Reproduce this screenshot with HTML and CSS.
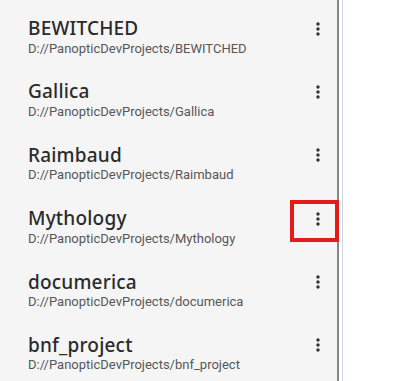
FILE: index.html
```html
<!DOCTYPE html>
<html>
<head>
<meta charset="utf-8">
<link rel="stylesheet" href="styles.css">
</head>
<body>
<div class="layout">
  <aside class="panel">
    <ul class="projects">
      <li class="project">
        <div class="info">
          <div class="name">BEWITCHED</div>
          <div class="path">D://PanopticDevProjects/BEWITCHED</div>
        </div>
        <button class="menu" aria-label="More"><svg viewBox="0 0 24 24" width="20" height="20"><path d="M12 8c1.1 0 2-.9 2-2s-.9-2-2-2-2 .9-2 2 .9 2 2 2zm0 2c-1.1 0-2 .9-2 2s.9 2 2 2 2-.9 2-2-.9-2-2-2zm0 6c-1.1 0-2 .9-2 2s.9 2 2 2 2-.9 2-2-.9-2-2-2z"/></svg></button>
      </li>
      <li class="project">
        <div class="info">
          <div class="name">Gallica</div>
          <div class="path">D://PanopticDevProjects/Gallica</div>
        </div>
        <button class="menu" aria-label="More"><svg viewBox="0 0 24 24" width="20" height="20"><path d="M12 8c1.1 0 2-.9 2-2s-.9-2-2-2-2 .9-2 2 .9 2 2 2zm0 2c-1.1 0-2 .9-2 2s.9 2 2 2 2-.9 2-2-.9-2-2-2zm0 6c-1.1 0-2 .9-2 2s.9 2 2 2 2-.9 2-2-.9-2-2-2z"/></svg></button>
      </li>
      <li class="project">
        <div class="info">
          <div class="name">Raimbaud</div>
          <div class="path">D://PanopticDevProjects/Raimbaud</div>
        </div>
        <button class="menu" aria-label="More"><svg viewBox="0 0 24 24" width="20" height="20"><path d="M12 8c1.1 0 2-.9 2-2s-.9-2-2-2-2 .9-2 2 .9 2 2 2zm0 2c-1.1 0-2 .9-2 2s.9 2 2 2 2-.9 2-2-.9-2-2-2zm0 6c-1.1 0-2 .9-2 2s.9 2 2 2 2-.9 2-2-.9-2-2-2z"/></svg></button>
      </li>
      <li class="project">
        <div class="info">
          <div class="name">Mythology</div>
          <div class="path">D://PanopticDevProjects/Mythology</div>
        </div>
        <button class="menu" aria-label="More"><svg viewBox="0 0 24 24" width="20" height="20"><path d="M12 8c1.1 0 2-.9 2-2s-.9-2-2-2-2 .9-2 2 .9 2 2 2zm0 2c-1.1 0-2 .9-2 2s.9 2 2 2 2-.9 2-2-.9-2-2-2zm0 6c-1.1 0-2 .9-2 2s.9 2 2 2 2-.9 2-2-.9-2-2-2z"/></svg></button>
        <span class="highlight"></span>
      </li>
      <li class="project">
        <div class="info">
          <div class="name">documerica</div>
          <div class="path">D://PanopticDevProjects/documerica</div>
        </div>
        <button class="menu" aria-label="More"><svg viewBox="0 0 24 24" width="20" height="20"><path d="M12 8c1.1 0 2-.9 2-2s-.9-2-2-2-2 .9-2 2 .9 2 2 2zm0 2c-1.1 0-2 .9-2 2s.9 2 2 2 2-.9 2-2-.9-2-2-2zm0 6c-1.1 0-2 .9-2 2s.9 2 2 2 2-.9 2-2-.9-2-2-2z"/></svg></button>
      </li>
      <li class="project">
        <div class="info">
          <div class="name">bnf_project</div>
          <div class="path">D://PanopticDevProjects/bnf_project</div>
        </div>
        <button class="menu" aria-label="More"><svg viewBox="0 0 24 24" width="20" height="20"><path d="M12 8c1.1 0 2-.9 2-2s-.9-2-2-2-2 .9-2 2 .9 2 2 2zm0 2c-1.1 0-2 .9-2 2s.9 2 2 2 2-.9 2-2-.9-2-2-2zm0 6c-1.1 0-2 .9-2 2s.9 2 2 2 2-.9 2-2-.9-2-2-2z"/></svg></button>
      </li>
    </ul>
  </aside>
  <div class="gap"></div>
  <main class="content"></main>
</div>
</body>
</html>
```

FILE: styles.css
```css
* { box-sizing: border-box; }
html, body { margin: 0; padding: 0; height: 100%; background: #ffffff; }
body { font-family: "Noto Sans", sans-serif; overflow: hidden; }

.layout {
  display: flex;
  height: 381px;
}

.panel {
  width: 339px;
  flex: none;
  background: #f5f5f5;
  border-right: 2px solid #868686;
}

.gap {
  width: 3px;
  flex: none;
  background: #ffffff;
}

.content {
  flex: 1;
  border-left: 1px solid #c9d9e9;
  background: #ffffff;
}

.projects {
  list-style: none;
  margin: 0;
  padding: 16px 0 0 28px;
}

.project {
  position: relative;
  display: flex;
  align-items: flex-start;
  height: 63.4px;
}

.info {
  flex: 1;
  min-width: 0;
}

.name {
  font-family: "Noto Sans", sans-serif;
  font-weight: 500;
  font-size: 19px;
  line-height: 24px;
  letter-spacing: 0.2px;
  color: #2a2a2a;
}

.path {
  font-family: Roboto, sans-serif;
  font-size: 13px;
  line-height: 14px;
  color: #575757;
  margin-top: 1.5px;
}

.menu {
  flex: none;
  width: 20px;
  height: 20px;
  margin: 2.5px 9px 0 0;
  padding: 0;
  border: none;
  background: transparent;
  display: flex;
}

.menu svg { fill: #333333; }

.highlight {
  position: absolute;
  left: 262px;
  top: -6px;
  width: 49px;
  height: 42px;
  border: 4px solid #e31b1b;
  pointer-events: none;
}
```
